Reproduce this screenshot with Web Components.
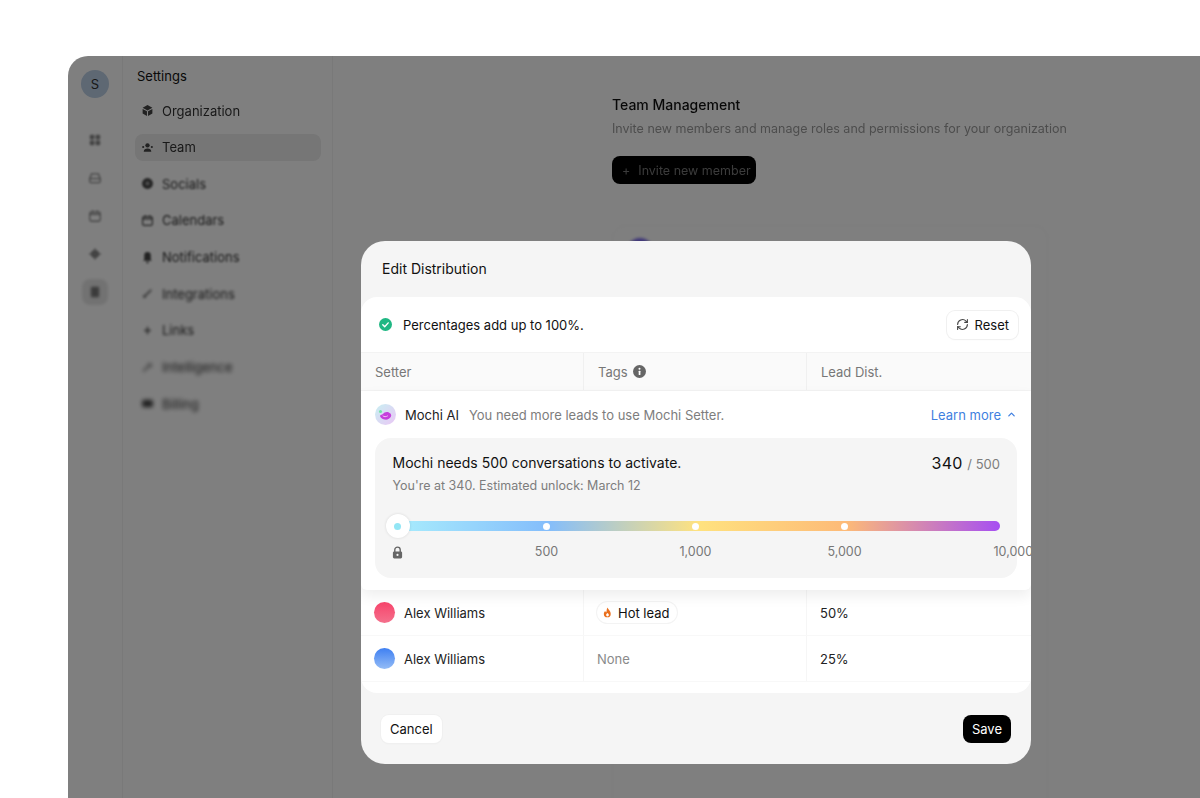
<!DOCTYPE html>
<html>
<head>
<meta charset="utf-8">
<title>Edit Distribution</title>
<style>
  html, body { margin: 0; height: 100%; background: #fff; overflow: hidden; }
  body { font-family: Inter, "Noto Sans", sans-serif; font-size: 13px; color: #111; }
</style>
</head>
<body>
<app-window>
  <rail-icon slot="rail" name="grid" style="margin-top:29px"></rail-icon>
  <rail-icon slot="rail" name="inbox"></rail-icon>
  <rail-icon slot="rail" name="calendar"></rail-icon>
  <rail-icon slot="rail" name="gear"></rail-icon>
  <rail-icon slot="rail" name="doc" active></rail-icon>

  <nav-item slot="nav" icon="cube" blur="0.4">Organization</nav-item>
  <nav-item slot="nav" icon="team" blur="0.6" active>Team</nav-item>
  <nav-item slot="nav" icon="globe" blur="0.9">Socials</nav-item>
  <nav-item slot="nav" icon="calendar" blur="1.1">Calendars</nav-item>
  <nav-item slot="nav" icon="bell" blur="1.3">Notifications</nav-item>
  <nav-item slot="nav" icon="plug" blur="1.6">Integrations</nav-item>
  <nav-item slot="nav" icon="link" blur="1.8">Links</nav-item>
  <nav-item slot="nav" icon="spark" blur="2">Intelligence</nav-item>
  <nav-item slot="nav" icon="card" blur="2">Billing</nav-item>

  <team-panel slot="main"></team-panel>
  <edit-distribution slot="modal"></edit-distribution>
</app-window>

<script>
const ICONS = {
  grid: '<rect x="3" y="3" width="8" height="8" rx="2" fill="currentColor"/><rect x="13" y="3" width="8" height="8" rx="2" fill="currentColor"/><rect x="3" y="13" width="8" height="8" rx="2" fill="currentColor"/><rect x="13" y="13" width="8" height="8" rx="2" fill="currentColor"/>',
  inbox: '<path d="M3 13 6 5h12l3 8v5a2 2 0 0 1-2 2H5a2 2 0 0 1-2-2z" fill="none" stroke="currentColor" stroke-width="2.2"/><path d="M3 13h18" stroke="currentColor" stroke-width="2.2"/>',
  calendar: '<rect x="3" y="5" width="18" height="16" rx="3" fill="none" stroke="currentColor" stroke-width="2.2"/><path d="M3 9h18M8 2v4M16 2v4" stroke="currentColor" stroke-width="2.2"/>',
  gear: '<circle cx="12" cy="12" r="7" fill="currentColor"/><path d="M12 2v4M12 18v4M2 12h4M18 12h4" stroke="currentColor" stroke-width="2.4"/>',
  doc: '<rect x="5" y="3" width="14" height="18" rx="2" fill="currentColor"/>',
  cube: '<path d="M12 2 21 7l-9 5-9-5z" fill="currentColor"/><path d="M3 9l8 4.5V22l-8-4.5zM21 9l-8 4.5V22l8-4.5z" fill="currentColor"/>',
  team: '<circle cx="12" cy="8" r="4" fill="currentColor"/><path d="M5 20c0-4 3-6 7-6s7 2 7 6z" fill="currentColor"/><circle cx="4" cy="11" r="2" fill="currentColor"/><circle cx="20" cy="11" r="2" fill="currentColor"/>',
  globe: '<circle cx="12" cy="12" r="10" fill="currentColor"/><circle cx="12" cy="12" r="4" fill="#999"/>',
  bell: '<path d="M12 2a6 6 0 0 1 6 6v7l2 3H4l2-3V8a6 6 0 0 1 6-6z" fill="currentColor"/><circle cx="12" cy="21" r="2" fill="currentColor"/>',
  plug: '<path d="M5 19 19 5M8 20l-4-4" stroke="currentColor" stroke-width="2.6" fill="none"/>',
  link: '<path d="M12 5v14M6 12h12" stroke="currentColor" stroke-width="2.4"/>',
  spark: '<path d="M4 19 18 6M14 4l6 6" stroke="currentColor" stroke-width="2.4" fill="none"/>',
  card: '<rect x="2" y="5" width="20" height="14" rx="3" fill="currentColor"/>'
};

class AppWindow extends HTMLElement {
  connectedCallback() {
    this.attachShadow({ mode: 'open' });
    this.shadowRoot.innerHTML = `
      <style>
        :host { display: block; height: 100%; box-sizing: border-box; padding: 56px 0 0 68px; }
        .window {
          position: relative;
          height: 100%;
          background: #fff;
          border-radius: 20px 0 0 0;
          overflow: hidden;
          display: grid;
          grid-template-columns: 55px 210px 1fr;
        }
        .rail {
          display: flex;
          flex-direction: column;
          align-items: center;
          padding-top: 14px;
          border-right: 1px solid #f2f2f2;
        }
        .avatar {
          width: 28px;
          height: 28px;
          border-radius: 50%;
          background: #bcd0e6;
          color: #333;
          font-size: 13px;
          display: grid;
          place-items: center;
        }
        .nav { border-right: 1px solid #f2f2f2; padding: 12px 11px 0 12px; }
        .nav h2 { font-size: 13px; font-weight: 400; margin: 0 0 8px 2px; line-height: 16px; color: #111; }
        .items { display: flex; flex-direction: column; filter: none; }
        .dim { position: absolute; inset: 0; background: rgba(0, 0, 0, .5); }
      </style>
      <div class="window">
        <div class="rail">
          <div class="avatar">S</div>
          <slot name="rail"></slot>
        </div>
        <div class="nav">
          <h2>Settings</h2>
          <div class="items"><slot name="nav"></slot></div>
        </div>
        <div class="main"><slot name="main"></slot></div>
        <div class="dim"></div>
      </div>
      <slot name="modal"></slot>
    `;
  }
}

class RailIcon extends HTMLElement {
  connectedCallback() {
    this.attachShadow({ mode: 'open' });
    const name = this.getAttribute('name');
    this.shadowRoot.innerHTML = `
      <style>
        :host { display: block; width: 26px; height: 26px; margin: 6px 0; border-radius: 8px; color: #888; filter: blur(.8px); }
        :host([name="doc"]) { background: #e4e4e4; color: #777; filter: blur(1.4px); }
        :host([name="gear"]) { filter: blur(1.2px); }
        svg { display: block; margin: 6px; }
      </style>
      <svg width="14" height="14" viewBox="0 0 24 24">${ICONS[name]}</svg>
    `;
  }
}

class NavItem extends HTMLElement {
  connectedCallback() {
    this.attachShadow({ mode: 'open' });
    const blur = this.getAttribute('blur') || 0;
    this.shadowRoot.innerHTML = `
      <style>
        :host { display: block; height: 36.67px; color: #333; font-size: 13px; }
        .row {
          height: 27px;
          margin-top: 5px;
          padding-left: 6px;
          display: flex;
          align-items: center;
          gap: 8px;
          border-radius: 8px;
        }
        :host([active]) .row { background: #ececec; }
        .inner { display: flex; align-items: center; gap: 8px; filter: blur(${blur}px); }
        svg { width: 13px; height: 13px; margin-left: 0; color: #444; }
      </style>
      <div class="row">
        <div class="inner">
          <svg viewBox="0 0 24 24">${ICONS[this.getAttribute('icon')]}</svg>
          <slot></slot>
        </div>
      </div>
    `;
  }
}

class TeamPanel extends HTMLElement {
  connectedCallback() {
    this.attachShadow({ mode: 'open' });
    this.shadowRoot.innerHTML = `
      <style>
        :host { display: block; padding: 40px 0 0 279px; }
        h1 { font-size: 14px; font-weight: 500; line-height: 18px; margin: 0; color: #111; filter: blur(.3px); }
        p { font-size: 12.5px; line-height: 16px; margin: 7px 0 0; color: #9a9a9a; filter: blur(.5px); white-space: nowrap; }
        .invite {
          margin-top: 19px;
          width: 144px;
          height: 28px;
          box-sizing: border-box;
          padding-left: 10px;
          display: flex;
          align-items: center;
          gap: 8px;
          background: #000;
          border-radius: 8px;
          color: #777;
          font-size: 12.5px;
          filter: blur(.7px);
        }
        .card {
          margin-top: 41px;
          width: 434px;
          height: 600px;
          border: 1px solid #f4f4f4;
          border-radius: 14px;
          position: relative;
          filter: blur(1.5px);
        }
        .dot { width: 26px; height: 26px; margin: 12px 0 0 14px; border-radius: 50%; background: #7c6bf0; }
      </style>
      <h1>Team Management</h1>
      <p>Invite new members and manage roles and permissions for your organization</p>
      <div class="invite"><span>+</span><span>Invite new member</span></div>
      <div class="card"><div class="dot"></div></div>
    `;
  }
}

class UiButton extends HTMLElement {
  connectedCallback() {
    this.attachShadow({ mode: 'open' });
    this.shadowRoot.innerHTML = `
      <style>
        :host {
          display: inline-flex;
          align-items: center;
          gap: 6px;
          height: 28px;
          box-sizing: border-box;
          padding: 0 9px;
          border-radius: 8px;
          background: #fff;
          color: #111;
          font-size: 13px;
          box-shadow: 0 0 0 1px #f0f0f0, 0 1px 2px rgba(0, 0, 0, .04);
        }
        :host([primary]) { background: #000; color: #fff; box-shadow: none; }
      </style>
      <slot></slot>
    `;
  }
}

class DistRow extends HTMLElement {
  connectedCallback() {
    this.attachShadow({ mode: 'open' });
    const from = this.getAttribute('from');
    const to = this.getAttribute('to');
    this.shadowRoot.innerHTML = `
      <style>
        :host {
          display: grid;
          grid-template-columns: 223px 223px 1fr;
          height: 46px;
          box-sizing: border-box;
          border-bottom: 1px solid #f8f8f8;
          color: #222;
          font-size: 13px;
        }
        .cell { display: flex; align-items: center; border-right: 1px solid #f6f6f6; padding-left: 13px; }
        .cell:first-child { padding-left: 14px; }
        .cell:last-child { border-right: 0; }
        .person { display: flex; align-items: center; gap: 9px; }
        i { width: 21px; height: 21px; border-radius: 50%; background: linear-gradient(${from}, ${to}); }
      </style>
      <div class="cell"><span class="person"><i></i>${this.getAttribute('name')}</span></div>
      <div class="cell"><slot name="tag"></slot></div>
      <div class="cell">${this.getAttribute('share')}</div>
    `;
  }
}

class TagChip extends HTMLElement {
  connectedCallback() {
    this.attachShadow({ mode: 'open' });
    this.shadowRoot.innerHTML = `
      <style>
        :host {
          display: inline-flex;
          align-items: center;
          gap: 5px;
          height: 21px;
          box-sizing: border-box;
          padding: 0 8px 0 5px;
          border-radius: 11px;
          background: #fff;
          box-shadow: 0 0 0 1px #f3f3f3;
          color: #111;
          font-size: 13px;
        }
        svg { display: block; }
      </style>
      <svg width="11" height="11" viewBox="0 0 24 24"><path d="M12 1c1 4 7 7 7 14a7.500 7.500 0 0 1-15 0c0-3 1.500-5 3-6.500.5 2 1.500 3 2.500 3C10.500 8 10 4 12 1zm0 12c-2 2-3 3-3 4.500a3 3 0 0 0 6 0C15 16 14 15 12 13z" fill="#ea6f1c" fill-rule="evenodd"/></svg>
      <slot></slot>
    `;
  }
}

class UnlockCard extends HTMLElement {
  connectedCallback() {
    this.attachShadow({ mode: 'open' });
    this.shadowRoot.innerHTML = `
      <style>
        :host {
          display: block;
          margin: 0 14px;
          height: 140px;
          box-sizing: border-box;
          padding: 15px 17px 0 17.500px;
          background: #f5f5f5;
          border-radius: 16px;
        }
        .top { display: flex; justify-content: space-between; }
        .title { font-size: 14px; line-height: 20px; color: #111; }
        .sub { font-size: 12.500px; line-height: 16px; margin-top: 5px; color: #7d7d7d; }
        .count { font-size: 13px; color: #7d7d7d; line-height: 20px; }
        .count b { font-size: 16px; font-weight: 400; color: #111; letter-spacing: .3px; margin-right: 1px; }
        .track {
          position: relative;
          margin: 27px 0 0 5px;
          height: 10px;
          border-radius: 5px;
          background: linear-gradient(90deg, #a8ecfd 0%, #84bdfb 25%, #ffe27f 50%, #fdba78 74.500%, #a64ff2 100%);
        }
        .dot {
          position: absolute;
          top: 1.500px;
          width: 7px;
          height: 7px;
          margin-left: -3.500px;
          border-radius: 50%;
          background: #fff;
        }
        .handle {
          position: absolute;
          left: -12px;
          top: -7px;
          width: 24px;
          height: 24px;
          border-radius: 50%;
          background: #fff;
          box-shadow: 0 0 3px rgba(0, 0, 0, .12);
          display: grid;
          place-items: center;
        }
        .handle::after { content: ''; width: 7px; height: 7px; border-radius: 50%; background: #93e6f5; }
        .ticks {
          display: flex;
          margin: 13px 0 0 5px;
          font-size: 12.500px;
          line-height: 16px;
          color: #777;
        }
        .tick { width: 149px; flex: none; }
        .tick span { display: inline-block; transform: translateX(-50%); }
        .tick svg { display: block; margin-left: -6.500px; margin-top: 1.500px; }
        .tick.end { flex: 1; width: auto; text-align: right; padding-right: 2px; }
        .tick.end span { transform: none; }
      </style>
      <div class="top">
        <div>
          <div class="title">Mochi needs 500 conversations to activate.</div>
          <div class="sub">You're at 340. Estimated unlock: March 12</div>
        </div>
        <div class="count"><b>340</b> / 500</div>
      </div>
      <div class="track">
        <div class="dot" style="left:24.75%"></div>
        <div class="dot" style="left:49.5%"></div>
        <div class="dot" style="left:74.2%"></div>
        <div class="handle"></div>
      </div>
      <div class="ticks">
        <div class="tick"><svg width="13" height="13" viewBox="0 0 24 24"><path d="M7 11V7a5 5 0 0 1 10 0v4" fill="none" stroke="#666" stroke-width="2.600"/><rect x="3.500" y="10" width="17" height="13" rx="2.500" fill="#666"/><circle cx="12" cy="16.500" r="2" fill="#f5f5f5"/></svg></div>
        <div class="tick"><span>500</span></div>
        <div class="tick"><span>1,000</span></div>
        <div class="tick"><span>5,000</span></div>
        <div class="tick end"><span>10,000</span></div>
      </div>
    `;
  }
}

class EditDistribution extends HTMLElement {
  connectedCallback() {
    this.attachShadow({ mode: 'open' });
    this.shadowRoot.innerHTML = `
      <style>
        :host {
          display: block;
          position: absolute;
          left: 361px;
          top: 241px;
          width: 670px;
          height: 523px;
          background: #f5f5f5;
          border-radius: 24px;
          overflow: hidden;
          color: #111;
          font-size: 13px;
        }
        header { height: 56px; box-sizing: border-box; padding: 19px 21px 0; font-size: 14px; line-height: 18px; color: #111; }
        .panel {
          position: relative;
          height: 396px;
          background: #fff;
          border-radius: 16px;
        }
        .status {
          height: 55px;
          box-sizing: border-box;
          padding: 0 13px 0 18px;
          display: flex;
          align-items: center;
          gap: 11px;
        }
        .status .grow { flex: 1; }
        .status svg.check { display: block; }
        .head {
          display: grid;
          grid-template-columns: 223px 223px 1fr;
          height: 39px;
          box-sizing: border-box;
          background: #fafafa;
          border-top: 1px solid #f3f3f3;
          border-bottom: 1px solid #f3f3f3;
          color: #777;
        }
        .head div { display: flex; align-items: center; gap: 5px; padding-left: 14px; border-right: 1px solid #f0f0f0; }
        .head div:last-child { border-right: 0; }
        .mochi {
          position: relative;
          z-index: 1;
          height: 199px;
          background: #fff;
          border-radius: 0 0 6px 6px;
          box-shadow: 0 6px 14px rgba(0, 0, 0, .07);
        }
        .mochi-row {
          height: 47px;
          box-sizing: border-box;
          padding: 0 15px 0 14px;
          display: flex;
          align-items: center;
          color: #222;
        }
        .mochi-row svg.logo { margin-right: 9px; }
        .hint { margin-left: 10px; color: #7d7d7d; flex: 1; }
        .learn { color: #3f7fe0; display: flex; align-items: center; gap: 6px; }
        footer {
          height: 71px;
          box-sizing: border-box;
          padding: 22px 20px 0;
          display: flex;
          justify-content: space-between;
          align-items: flex-start;
        }
      </style>
      <header>Edit Distribution</header>
      <div class="panel">
        <div class="status">
          <svg class="check" width="13" height="13" viewBox="0 0 24 24"><circle cx="12" cy="12" r="12" fill="#1fb783"/><path d="M7 12.500l3.500 3.500L17 9" fill="none" stroke="#fff" stroke-width="2.600" stroke-linecap="round" stroke-linejoin="round"/></svg>
          <span>Percentages add up to 100%.</span>
          <span class="grow"></span>
          <ui-button>
            <svg width="13" height="13" viewBox="0 0 24 24" fill="none" stroke="#444" stroke-width="2" stroke-linecap="round" stroke-linejoin="round"><path d="M3 12a9 9 0 0 1 15.500-6.200L21 8"/><path d="M21 3v5h-5"/><path d="M21 12a9 9 0 0 1-15.500 6.200L3 16"/><path d="M3 21v-5h5"/></svg>
            Reset
          </ui-button>
        </div>
        <div class="head">
          <div>Setter</div>
          <div>Tags <svg width="13" height="13" viewBox="0 0 24 24"><circle cx="12" cy="12" r="12" fill="#666"/><rect x="10.500" y="10.500" width="3.200" height="8" rx="1" fill="#fff"/><circle cx="12" cy="7" r="1.900" fill="#fff"/></svg></div>
          <div>Lead Dist.</div>
        </div>
        <div class="mochi">
          <div class="mochi-row">
            <svg class="logo" width="21" height="21" viewBox="0 0 21 21">
              <defs><linearGradient id="mochi-bg" x1="0" y1="0" x2="1" y2="1"><stop offset="0" stop-color="#c8f0f2"/><stop offset="1" stop-color="#eac6f5"/></linearGradient></defs>
              <circle cx="10.500" cy="10.500" r="10.500" fill="url(#mochi-bg)"/>
              <path d="M5 11.500c1-.5 2-1 3-1.500 1-2 5-3 6.500-1 1.500.5 2 2 1.500 3.500-1 2.500-4 3.500-6.500 3-2.500-.5-4.500-2-4.500-4z" fill="#c63fdc"/>
              <path d="M8 12c1 1 3 1 4.500 0" fill="none" stroke="#f3c4f7" stroke-width="1" stroke-linecap="round"/>
              <circle cx="5.500" cy="7.500" r="1.500" fill="#74e6a6"/>
            </svg>
            Mochi AI
            <span class="hint">You need more leads to use Mochi Setter.</span>
            <span class="learn">Learn more
              <svg width="9" height="9" viewBox="0 0 10 10" fill="none" stroke="#3f7fe0" stroke-width="1.400" stroke-linecap="round" stroke-linejoin="round"><path d="M2 6.500l3-3 3 3"/></svg>
            </span>
          </div>
          <unlock-card></unlock-card>
        </div>
        <dist-row name="Alex Williams" share="50%" from="#f7446b" to="#f4708c"><tag-chip slot="tag">Hot lead</tag-chip></dist-row>
        <dist-row name="Alex Williams" share="25%" from="#3f80f2" to="#94bcf6"><span slot="tag" style="color:#8a8a8a">None</span></dist-row>
      </div>
      <footer>
        <ui-button>Cancel</ui-button>
        <ui-button primary>Save</ui-button>
      </footer>
    `;
  }
}

customElements.define('rail-icon', RailIcon);
customElements.define('nav-item', NavItem);
customElements.define('team-panel', TeamPanel);
customElements.define('ui-button', UiButton);
customElements.define('tag-chip', TagChip);
customElements.define('dist-row', DistRow);
customElements.define('unlock-card', UnlockCard);
customElements.define('edit-distribution', EditDistribution);
customElements.define('app-window', AppWindow);
</script>
</body>
</html>
